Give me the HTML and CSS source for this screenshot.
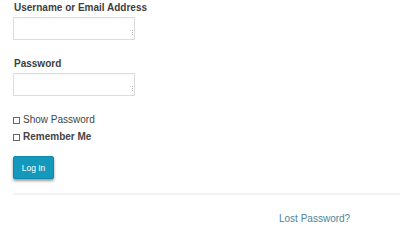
FILE: index.html
```html
<!DOCTYPE html>
<html>
<head>
<meta charset="utf-8">
<link rel="stylesheet" href="styles.css">
</head>
<body>
<form class="login">
  <div class="field">
    <label class="label">Username or Email Address</label>
    <div class="input"><span class="grip"></span></div>
  </div>
  <div class="field pw">
    <label class="label">Password</label>
    <div class="input"><span class="grip"></span></div>
  </div>
  <div class="check first"><span class="box"></span><span>Show Password</span></div>
  <div class="check bold"><span class="box"></span><span>Remember Me</span></div>
  <div class="actions"><button type="button" class="btn">Log In</button></div>
  <hr class="divider">
  <div class="links"><a class="lost">Lost Password?</a></div>
</form>
</body>
</html>
```
FILE: styles.css
```css
html, body { margin: 0; padding: 0; background: #fff; }
body { font-family: "Liberation Sans", Arial, sans-serif; color: #444; }
.login { padding: 0 0 0 13px; display: flex; flex-direction: column; }
.field { display: flex; flex-direction: column; }
.label { font-weight: bold; font-size: 10px; line-height: 13px; padding: 1px 0 0 1px; color: #3e3e3e; }
.input { margin-top: 3px; width: 120px; height: 21px; border: 1px solid #dcdcdc; position: relative; box-shadow: inset 0 1px 1px rgba(0,0,0,0.03); }
.grip { position: absolute; right: 0; top: 12px; width: 1px; height: 5px; border-left: 1px dotted #aaa; }
.pw { margin-top: 16px; }
.check { display: flex; align-items: center; font-size: 10px; line-height: 13px; color: #444; }
.check.first { margin-top: 17px; }
.check.bold { font-weight: bold; margin-top: 4px; }
.box { width: 5px; height: 5px; border: 1px solid #666; margin-right: 3px; margin-top: 2px; }
.actions { margin-top: 13px; }
.btn { width: 41px; height: 23px; background: #1499bd; border: 1px solid #0e88aa; border-radius: 2px; color: #fff; font-family: "Liberation Sans", Arial, sans-serif; font-size: 8.5px; padding: 0; box-shadow: 0 2px 3px rgba(0,0,0,0.4); }
.divider { margin: 14px 0 0 0; border: 0; height: 2px; background: #f3f3f3; }
.links { display: flex; justify-content: flex-start; padding-left: 266px; margin-top: 18px; }
.lost { font-size: 10px; color: #4f8496; text-decoration: none; }
```
